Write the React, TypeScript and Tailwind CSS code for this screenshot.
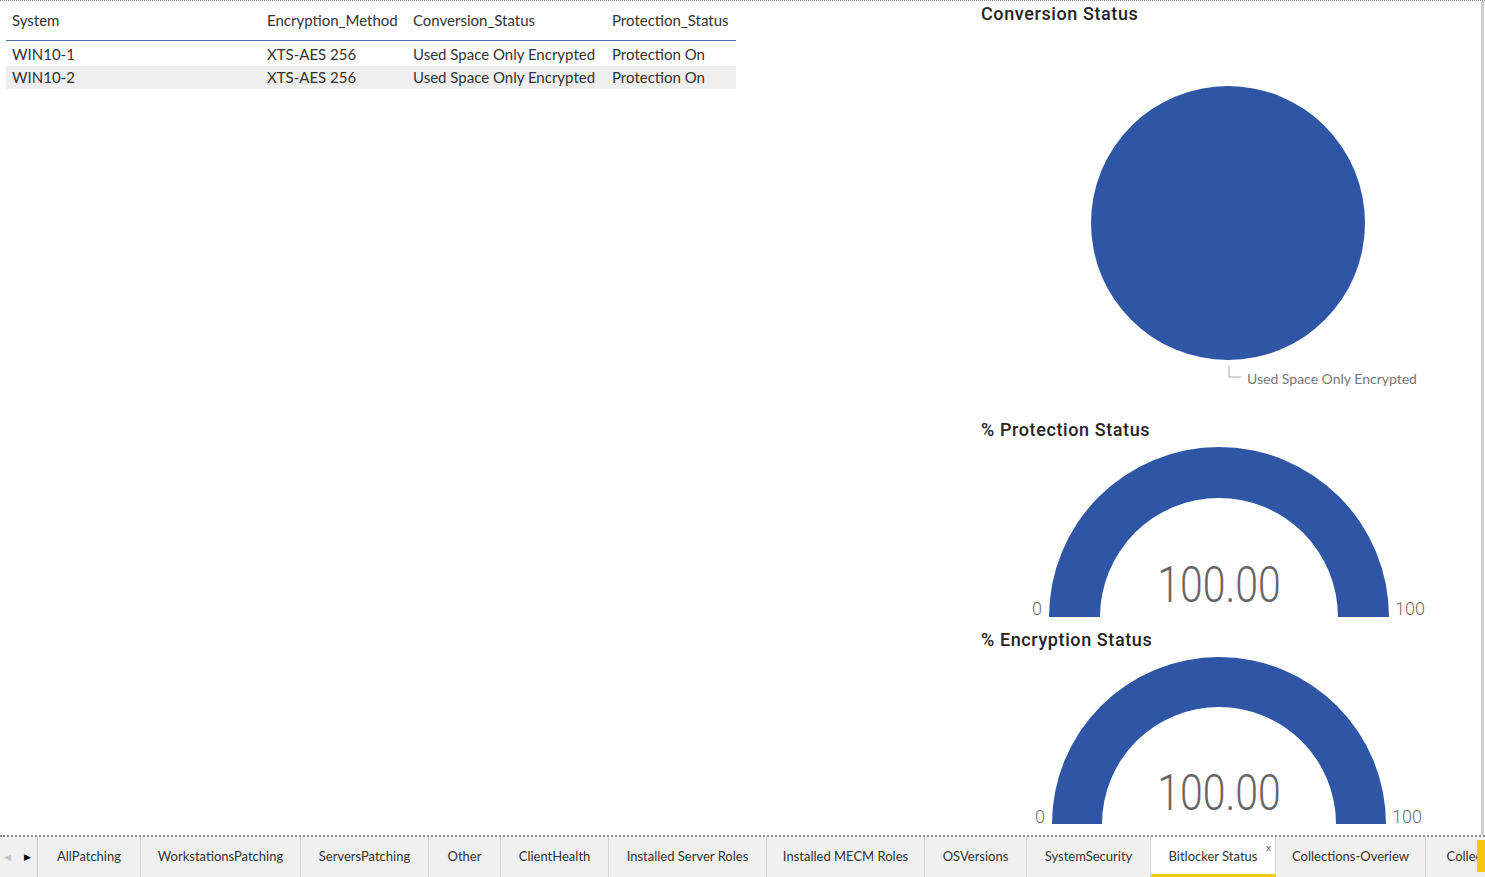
import React from "react";

const rows = [
  { system: "WIN10-1", method: "XTS-AES 256", conversion: "Used Space Only Encrypted", protection: "Protection On" },
  { system: "WIN10-2", method: "XTS-AES 256", conversion: "Used Space Only Encrypted", protection: "Protection On" },
];

const tabs = [
  { name: "AllPatching", w: "w-[103px]" },
  { name: "WorkstationsPatching", w: "w-[160px]" },
  { name: "ServersPatching", w: "w-[128px]" },
  { name: "Other", w: "w-[72px]" },
  { name: "ClientHealth", w: "w-[108px]" },
  { name: "Installed Server Roles", w: "w-[158px]" },
  { name: "Installed MECM Roles", w: "w-[158px]" },
  { name: "OSVersions", w: "w-[102px]" },
  { name: "SystemSecurity", w: "w-[124px]" },
  { name: "Bitlocker Status", w: "w-[125px]", active: true },
  { name: "Collections-Overiew", w: "w-[150px]" },
  { name: "Collections-Details", w: "w-[150px]" },
];

const BLUE = "#2f56a5";

function Gauge({ r, inner, cy, zeroX, hundredX, labelY, valueY }: { r: number; inner: number; cy: number; zeroX: number; hundredX: number; labelY: number; valueY: number }) {
  const cx = 244;
  const d = `M ${cx - r} ${cy} A ${r} ${r} 0 0 1 ${cx + r} ${cy} L ${cx + inner} ${cy} A ${inner} ${inner} 0 0 0 ${cx - inner} ${cy} Z`;
  return (
    <svg width="505" height={cy + 10} className="block">
      <path d={d} fill={BLUE} />
      <text x={zeroX} y={labelY} fill="#6f6f6f" fontSize="18" fontFamily="Roboto, sans-serif" fontWeight="300">0</text>
      <text x={hundredX} y={labelY} fill="#6f6f6f" fontSize="18" fontFamily="Roboto, sans-serif" fontWeight="300">100</text>
      <text
        x={cx}
        y={valueY}
        fill="#666"
        fontSize="50"
        fontFamily="Roboto, sans-serif"
        fontWeight="300"
        textAnchor="middle"
        transform={`translate(${cx} 0) scale(0.82 1) translate(${-cx} 0)`}
      >
        100.00
      </text>
    </svg>
  );
}

export default function App() {
  return (
    <div className="w-[1485px] h-[877px] flex flex-col bg-white overflow-hidden font-['Lato',sans-serif]">
      <div className="h-[837px] shrink-0 flex border-t border-dotted border-[#888] border-b-2 border-b-[#8a8a8a]">
        <div className="w-[1481px] flex">
          {/* table */}
          <div className="w-[975px] pl-[6px]">
            <table className="w-[730px] border-collapse text-[15px] text-[#333]">
              <thead>
                <tr className="h-[39px]">
                  <th className="w-[254px] text-left font-normal pl-[6px] pb-[1px] border-b border-[#4d6da8]">System</th>
                  <th className="w-[146px] text-left font-normal pl-[7px] pb-[1px] border-b border-[#4d6da8]">Encryption_Method</th>
                  <th className="w-[200px] text-left font-normal pl-[7px] pb-[1px] border-b border-[#4d6da8]">Conversion_Status</th>
                  <th className="text-left font-normal pl-[6px] pb-[1px] border-b border-[#4d6da8]">Protection_Status</th>
                </tr>
              </thead>
              <tbody>
                <tr className="h-[26px] align-bottom">
                  <td className="pl-[6px] pb-[1px]">{rows[0].system}</td>
                  <td className="pl-[7px] pb-[1px]">{rows[0].method}</td>
                  <td className="pl-[7px] pb-[1px]">{rows[0].conversion}</td>
                  <td className="pl-[6px] pb-[1px]">{rows[0].protection}</td>
                </tr>
                <tr className="h-[23px] bg-[#eeeeee]">
                  <td className="pl-[6px]">{rows[1].system}</td>
                  <td className="pl-[7px]">{rows[1].method}</td>
                  <td className="pl-[7px]">{rows[1].conversion}</td>
                  <td className="pl-[6px]">{rows[1].protection}</td>
                </tr>
              </tbody>
            </table>
          </div>

          {/* charts */}
          <div className="w-[506px] flex flex-col">
            <div className="h-[416px] flex flex-col">
              <div className="h-[26px] pl-[6px] text-[18px] leading-[26px] font-medium text-[#252423] font-['Roboto',sans-serif] tracking-[0.6px]">
                Conversion Status
              </div>
              <svg width="505" height="390" className="block">
                <circle cx="253" cy="196" r="137" fill={BLUE} />
                <polyline points="254,339 254,350 266,350" fill="none" stroke="#aaa" strokeWidth="1" />
                <text x="272" y="357" fill="#777" fontSize="14" fontFamily="Lato, sans-serif">
                  Used Space Only Encrypted
                </text>
              </svg>
            </div>
            <div className="h-[210px] flex flex-col">
              <div className="h-[26px] pl-[6px] text-[18px] leading-[26px] font-medium text-[#252423] font-['Roboto',sans-serif] tracking-[0.6px]">
                % Protection Status
              </div>
              <Gauge r={170} inner={119} cy={174} zeroX={57} hundredX={420} labelY={172} valueY={159} />
            </div>
            <div className="h-[209px] flex flex-col">
              <div className="h-[26px] pl-[6px] text-[18px] leading-[26px] font-medium text-[#252423] font-['Roboto',sans-serif] tracking-[0.6px]">
                % Encryption Status
              </div>
              <Gauge r={167} inner={117} cy={171} zeroX={60} hundredX={417} labelY={170} valueY={157} />
            </div>
          </div>
        </div>
        <div className="w-[3px] bg-[#cfcfcf]" />
      </div>

      {/* tab bar */}
      <div className="h-[40px] flex bg-[#f0f0f0] text-[13px] text-[#333] relative">
        <div className="w-[38px] shrink-0 flex items-center border-r border-[#c8c8c8]">
          <span className="ml-[4px] text-[9px] text-[#c4c4c4]">◀</span>
          <span className="ml-[13px] text-[9px] text-black">▶</span>
        </div>
        {tabs.map((t) => (
          <div
            key={t.name}
            className={
              t.active
                ? `${t.w} shrink-0 relative flex items-center justify-center bg-white border-b-[3px] border-[#f2c811] border-r border-r-[#d4d4d4] pt-[3px]`
                : `${t.w} shrink-0 flex items-center justify-center border-r border-[#d4d4d4]`
            }
          >
            {t.name}
            {t.active && <span className="absolute right-[4px] top-[3px] text-[10px] text-[#555]">x</span>}
          </div>
        ))}
        <div className="absolute right-0 top-[3px] w-[8px] h-[32px] bg-[#f2c811]" />
      </div>
    </div>
  );
}
